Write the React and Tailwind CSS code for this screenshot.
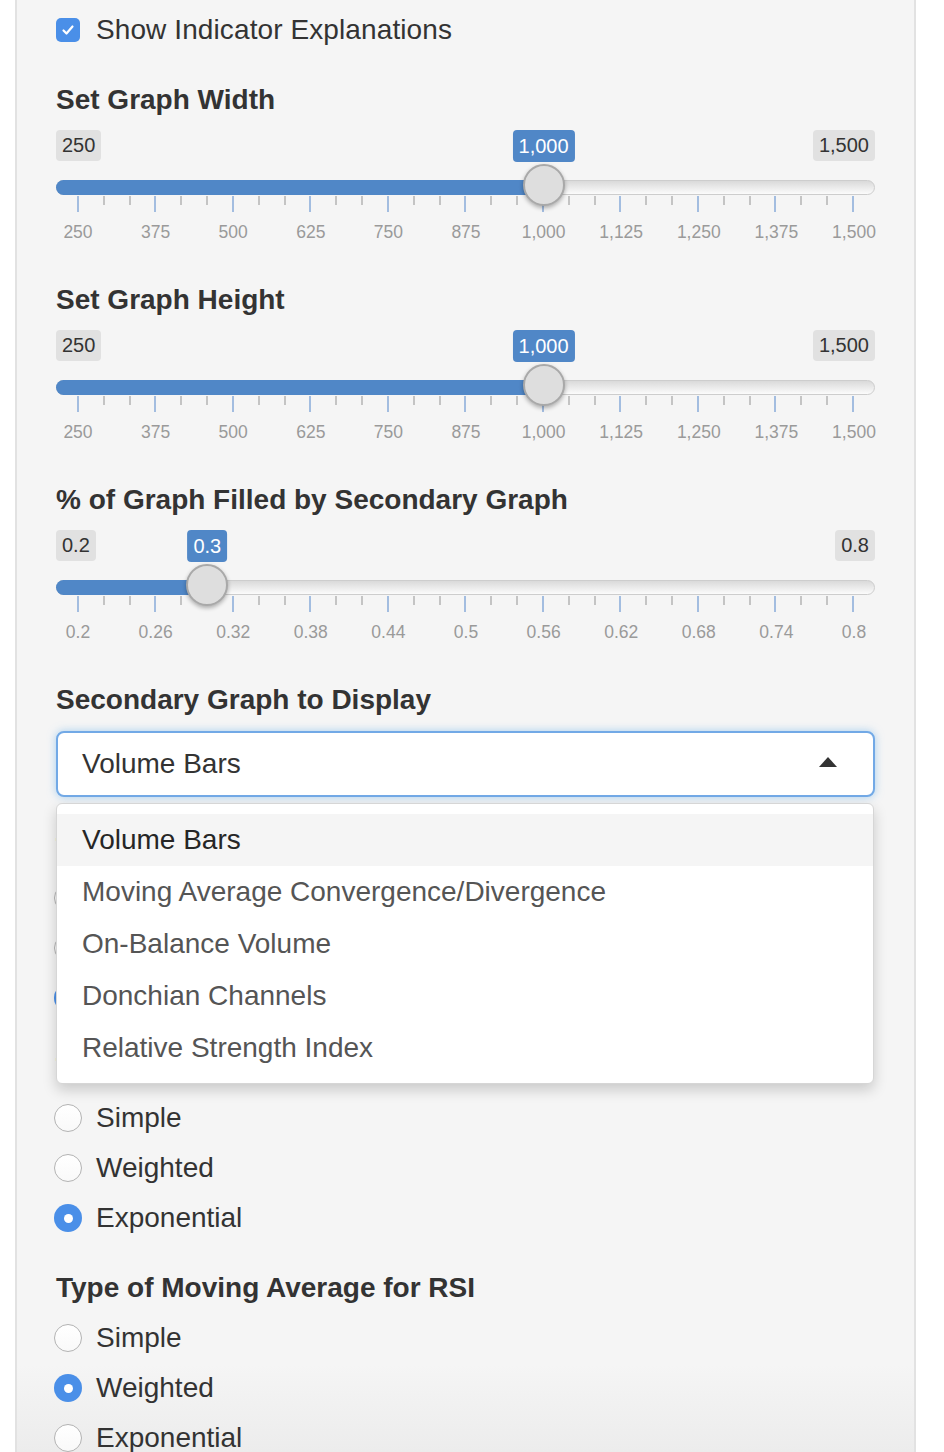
import React from "react";

const GRID_LEFT = 22;
const GRID_W = 776;

const RangeSlider = ({ min, max, value, minLabel, maxLabel, valueLabel, ticks }) => {
  const x = GRID_LEFT + (GRID_W * (value - min)) / (max - min);
  const marks = Array.from({ length: 31 }, (_, i) => i % 3 === 0);

  return (
    <div className="h-[160px] pt-[10px]">
      {/* min / value / max labels */}
      <div className="relative flex h-[32px] items-start justify-between text-[20px] text-[#333]">
        <span className="h-[31px] rounded-[4px] bg-[#e1e1e1] px-[6px] leading-[31px]">{minLabel}</span>
        <span
          className="absolute top-0 h-[32px] -translate-x-1/2 rounded-[4px] bg-[#5087c7] px-[6px] leading-[32px] text-white"
          style={{ left: x }}
        >
          {valueLabel}
        </span>
        <span className="h-[31px] rounded-[4px] bg-[#e1e1e1] px-[6px] leading-[31px]">{maxLabel}</span>
      </div>

      {/* track with fill and handle */}
      <div className="relative mt-[18px] h-[15px] rounded-full border border-[#cdcdcd] bg-[linear-gradient(to_bottom,#dadada,#fbfbfb)]">
        <div
          className="-m-px h-[15px] rounded-l-full bg-[#5087c7]"
          style={{ width: x }}
        />
        <span
          className="absolute top-[-17px] z-[1] h-[42px] w-[42px] -translate-x-1/2 rounded-full border-2 border-[#a9a9a9] bg-[#dedede] shadow-[0_2px_4px_rgba(0,0,0,0.3)]"
          style={{ left: x - 1 }}
        />
      </div>

      {/* grid marks */}
      <div className="mx-[21px] mt-px flex h-[16px] items-start justify-between">
        {marks.map((major, i) => (
          <span
            key={i}
            className={major ? "h-[16px] w-[2px] bg-[#a3bde0]" : "h-[9px] w-[2px] bg-[#c4c4c4]"}
          />
        ))}
      </div>

      {/* grid labels */}
      <div className="ml-[-16.8px] mt-[9px] grid w-[853.6px] grid-cols-11 text-center text-[17.5px] leading-[22px] text-[#9a9a9a]">
        {ticks.map((t) => (
          <span key={t} className="whitespace-nowrap">{t}</span>
        ))}
      </div>
    </div>
  );
};

const Heading = ({ children }) => (
  <div className="h-[40px] whitespace-nowrap text-[28px] font-bold leading-[40px] text-[#333]">
    {children}
  </div>
);

const Radio = ({ label, checked }) => (
  <div className="-ml-[2px] flex h-[50px] items-center gap-[14px]">
    {checked ? (
      <span className="flex h-[28px] w-[28px] items-center justify-center rounded-full bg-[#4a8fe8]">
        <span className="h-[9px] w-[9px] rounded-full bg-white" />
      </span>
    ) : (
      <span className="h-[28px] w-[28px] rounded-full border border-[#b3b3b3] bg-[linear-gradient(to_bottom,#ffffff,#f9f9f9)]" />
    )}
    <span className="text-[28px] text-[#333]">{label}</span>
  </div>
);

const RadioGroup = ({ label, selected }) => (
  <div className="mb-[25px]">
    <Heading>{label}</Heading>
    <div className="mt-[5px] flex flex-col">
      {["Simple", "Weighted", "Exponential"].map((o) => (
        <Radio key={o} label={o} checked={o === selected} />
      ))}
    </div>
  </div>
);

const sizeTicks = ["250", "375", "500", "625", "750", "875", "1,000", "1,125", "1,250", "1,375", "1,500"];
const pctTicks = ["0.2", "0.26", "0.32", "0.38", "0.44", "0.5", "0.56", "0.62", "0.68", "0.74", "0.8"];

const options = [
  "Volume Bars",
  "Moving Average Convergence/Divergence",
  "On-Balance Volume",
  "Donchian Channels",
  "Relative Strength Index",
];

export default function App() {
  return (
    <div className="h-[1452px] w-[944px] overflow-hidden bg-white font-['Liberation_Sans',Arial,sans-serif]">
      <div className="ml-[15px] h-[1452px] w-[901px] border-x-2 border-[#e2e2e2] bg-[linear-gradient(to_bottom,#f5f5f5_94%,#ececec)] px-[39px]">
        {/* checkbox */}
        <div className="mb-[20px] flex h-[60px] items-center gap-[16px]">
          <span className="flex h-[24px] w-[24px] items-center justify-center rounded-[5px] bg-[#4a8fe8]">
            <svg width="16" height="16" viewBox="0 0 16 16" fill="none">
              <path d="M3.5 8.5l3 3 6-7" stroke="white" strokeWidth="2.2" strokeLinecap="round" strokeLinejoin="round" />
            </svg>
          </span>
          <span className="text-[28px] tracking-[0.1px] text-[#333]">Show Indicator Explanations</span>
        </div>

        <Heading>Set Graph Width</Heading>
        <RangeSlider min={250} max={1500} value={1000} minLabel="250" maxLabel="1,500" valueLabel="1,000" ticks={sizeTicks} />

        <Heading>Set Graph Height</Heading>
        <RangeSlider min={250} max={1500} value={1000} minLabel="250" maxLabel="1,500" valueLabel="1,000" ticks={sizeTicks} />

        <Heading>% of Graph Filled by Secondary Graph</Heading>
        <RangeSlider min={0.2} max={0.8} value={0.3} minLabel="0.2" maxLabel="0.8" valueLabel="0.3" ticks={pctTicks} />

        <Heading>Secondary Graph to Display</Heading>
        <div className="relative mt-[11px] mb-[31px]">
          <div className="flex h-[66px] items-center justify-between rounded-[8px] border-2 border-[#72a9e6] bg-white pl-[24px] pr-[36px] shadow-[0_0_8px_rgba(102,175,233,0.55)]">
            <span className="text-[28px] text-[#333]">Volume Bars</span>
            <svg width="18" height="10" viewBox="0 0 18 10" className="-mt-[4px]">
              <polygon points="9,0 18,10 0,10" fill="#333" />
            </svg>
          </div>

          {/* open dropdown menu lies over the radio groups below */}
          <div className="absolute left-0 right-[1px] top-[72px] z-10 flex flex-col rounded-[6px] border border-[#d6d6d6] bg-white pt-[10px] pb-[9px] shadow-[0_6px_14px_rgba(0,0,0,0.18)]">
            {options.map((o, i) => (
              <div
                key={o}
                className={`flex h-[52px] items-center pl-[25px] text-[28px] ${
                  i === 0 ? "bg-[#f5f5f5] text-[#262626]" : "text-[#555]"
                }`}
              >
                {o}
              </div>
            ))}
          </div>
        </div>

        <RadioGroup label="Type of Moving Average for MACD" selected="Exponential" />
        <RadioGroup label="Type of Moving Average for Donchian" selected="Exponential" />
        <RadioGroup label="Type of Moving Average for RSI" selected="Weighted" />
      </div>
    </div>
  );
}
